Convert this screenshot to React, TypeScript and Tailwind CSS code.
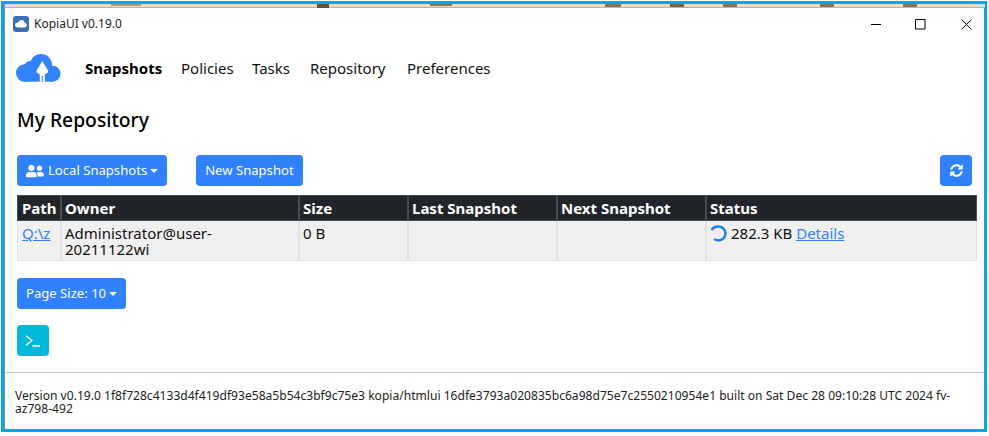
import { FaSyncAlt, FaUserFriends } from "react-icons/fa";

const font = { fontFamily: '"Noto Sans", sans-serif' };

function Caret() {
  return <span className="ml-[3px] inline-block border-x-[4px] border-t-[4px] border-x-transparent border-t-white" />;
}

function Cloud({ fill, size }: { fill: string; size: number }) {
  return (
    <svg width={size} viewBox="0 0 45 28" className="shrink-0">
      <g fill={fill}>
        <circle cx="8.700" cy="19" r="8.700" />
        <circle cx="14" cy="13" r="6" />
        <circle cx="25" cy="11" r="11" />
        <circle cx="36.500" cy="19.700" r="8" />
        <rect x="8" y="14" width="29" height="13.700" />
      </g>
      <path fill="white" d="M26.300 7L32 16.500 32 18.500 28.800 20.500V28H23.800V20.500L20.600 18.500 20.600 16.500z" />
      <rect x="25.800" y="22" width="1" height="6" fill={fill} />
    </svg>
  );
}

function Spinner() {
  return (
    <svg width="17" height="17" viewBox="0 0 17 17" fill="none" className="mr-[4px] inline-block shrink-0 align-[-3px]">
      <path d="M2.200 4.200A7 7 0 0 1 8.500 1.500a7 7 0 0 1 0 14 7 7 0 0 1-3.500-1" stroke="#1f7cf5" strokeWidth="2.500" strokeLinecap="round" />
    </svg>
  );
}

function Btn({ children, className = "" }: { children: React.ReactNode; className?: string }) {
  return (
    <button className={`flex h-[31px] items-center rounded-[4px] bg-[#2f81fd] px-[9px] text-[13.100px] text-white ${className}`}>
      {children}
    </button>
  );
}

const headers = [
  ["Path", "w-[44px] pl-[4px]"],
  ["Owner", "w-[238px] pl-[3px]"],
  ["Size", "w-[109px] pl-[3px]"],
  ["Last Snapshot", "w-[149px] pl-[3px]"],
  ["Next Snapshot", "w-[149px] pl-[3px]"],
  ["Status", "flex-1 pl-[3px]"],
];

const cell = "border border-t-0 border-[#dee2e6]";

export default function App() {
  return (
    <div style={font} className="h-[436px] w-[989px] overflow-hidden bg-white pt-[1px] text-[#111]">
      <div className="ml-[1px] flex h-[431px] w-[986px] flex-col border-[3px] border-[#06a4e8]">
        <div className="flex flex-1 flex-col border-l border-[#8a8a8a]">
          {/* bit of the window behind, showing above the title bar */}
          <svg width="980" height="4" className="shrink-0 bg-[#dcdcdc]">
            <rect x="0" y="3" width="980" height="1" fill="#b5b5b5" />
            <rect x="106" y="0" width="30" height="2" fill="#9a9a9a" />
            <rect x="312" y="0" width="12" height="4" fill="#555" />
            <rect x="425" y="0" width="22" height="2" fill="#777" />
            <rect x="600" y="0" width="16" height="3" fill="#777" />
            <rect x="665" y="0" width="14" height="3" fill="#666" />
            <rect x="718" y="0" width="14" height="3" fill="#777" />
            <rect x="815" y="0" width="14" height="3" fill="#777" />
            <rect x="898" y="0" width="14" height="3" fill="#777" />
          </svg>
          <div className="flex h-[32px] shrink-0 items-center pl-[8px] text-[12px]">
            <div className="flex h-4 w-4 items-center justify-center rounded-[3px] bg-[#3a6fb8]">
              <Cloud fill="white" size={12} />
            </div>
            <span className="ml-[5px] text-[#222]">KopiaUI v0.19.0</span>
            <div className="ml-auto flex items-center">
              <svg width="11" height="11" viewBox="0 0 11 11" className="mr-[33px]"><path d="M0 5.500H10" stroke="black" /></svg>
              <svg width="11" height="11" viewBox="0 0 11 11" className="mr-[35px]"><path d="M.5.500h9.500v9.500H.5z" fill="none" stroke="black" /></svg>
              <svg width="11" height="11" viewBox="0 0 11 11" className="mr-[12px]"><path d="M.5.500L10.500 10.500M10.500.500L.5 10.500" stroke="black" /></svg>
            </div>
          </div>
          <div className="flex h-[56px] shrink-0 items-center pl-[11px] text-[15px]">
            <Cloud fill="#3083fb" size={45} />
            <div className="ml-[24px] flex">
              <span className="w-[96px] font-bold text-black">Snapshots</span>
              <span className="w-[71px]">Policies</span>
              <span className="w-[58px]">Tasks</span>
              <span className="w-[97px]">Repository</span>
              <span>Preferences</span>
            </div>
          </div>
          <div className="flex flex-1 flex-col px-[12px]">
            <h1 className="mt-[12px] text-[19.300px] font-medium leading-[24px] text-black">My Repository</h1>
            <div className="mt-[23px] flex w-[955px] items-center">
              <Btn>
                <FaUserFriends size={18} />
                <span className="ml-[4px]">Local Snapshots</span>
                <Caret />
              </Btn>
              <Btn className="ml-[29px]">New Snapshot</Btn>
              <Btn className="ml-auto w-[32px] justify-center !px-0">
                <FaSyncAlt size={13} />
              </Btn>
            </div>
            <div className="mt-[9px] w-[960px] text-[15px]">
              <div className="flex h-[26px] bg-[#212529] font-bold text-white">
                {headers.map(([h, w]) => (
                  <div key={h} className={`flex items-center border border-[#454d55] ${w}`}>{h}</div>
                ))}
              </div>
              <div className="flex h-[40px] bg-[#f0f0f1] leading-[16px]">
                <div className={`w-[44px] pl-[4px] pt-[4px] text-[#2f81fd] underline ${cell}`}>Q:\z</div>
                <div className={`w-[238px] pl-[3px] pt-[4px] ${cell}`}>Administrator@user-<br />20211122wi</div>
                <div className={`w-[109px] pl-[3px] pt-[4px] ${cell}`}>0 B</div>
                <div className={`w-[149px] ${cell}`} />
                <div className={`w-[149px] ${cell}`} />
                <div className={`flex-1 pl-[3px] pt-[4px] ${cell}`}>
                  <Spinner />282.3 KB <span className="text-[#2f81fd] underline">Details</span>
                </div>
              </div>
            </div>
            <Btn className="mt-[17px] w-fit">
              Page Size: 10
              <Caret />
            </Btn>
            <button className="mt-[16px] flex h-[31px] w-[32px] items-center justify-center rounded-[4px] bg-[#00b8d9]">
              <svg width="16" height="12" viewBox="0 0 16 12" fill="none" stroke="white" strokeWidth="1.300">
                <path d="M1 .800L7 5.500 1 10.200M7.500 11H15" />
              </svg>
            </button>
          </div>
          <div className="h-[57px] shrink-0 border-t border-[#c9c9c9] pl-[10px] pr-[20px] pt-[16px] text-[12.080px] leading-[13px] text-[#222]">
            Version v0.19.0 1f8f728c4133d4f419df93e58a5b54c3bf9c75e3 kopia/htmlui 16dfe3793a020835bc6a98d75e7c2550210954e1 built on Sat Dec 28 09:10:28 UTC 2024 fv-az798-492
          </div>
        </div>
      </div>
    </div>
  );
}
